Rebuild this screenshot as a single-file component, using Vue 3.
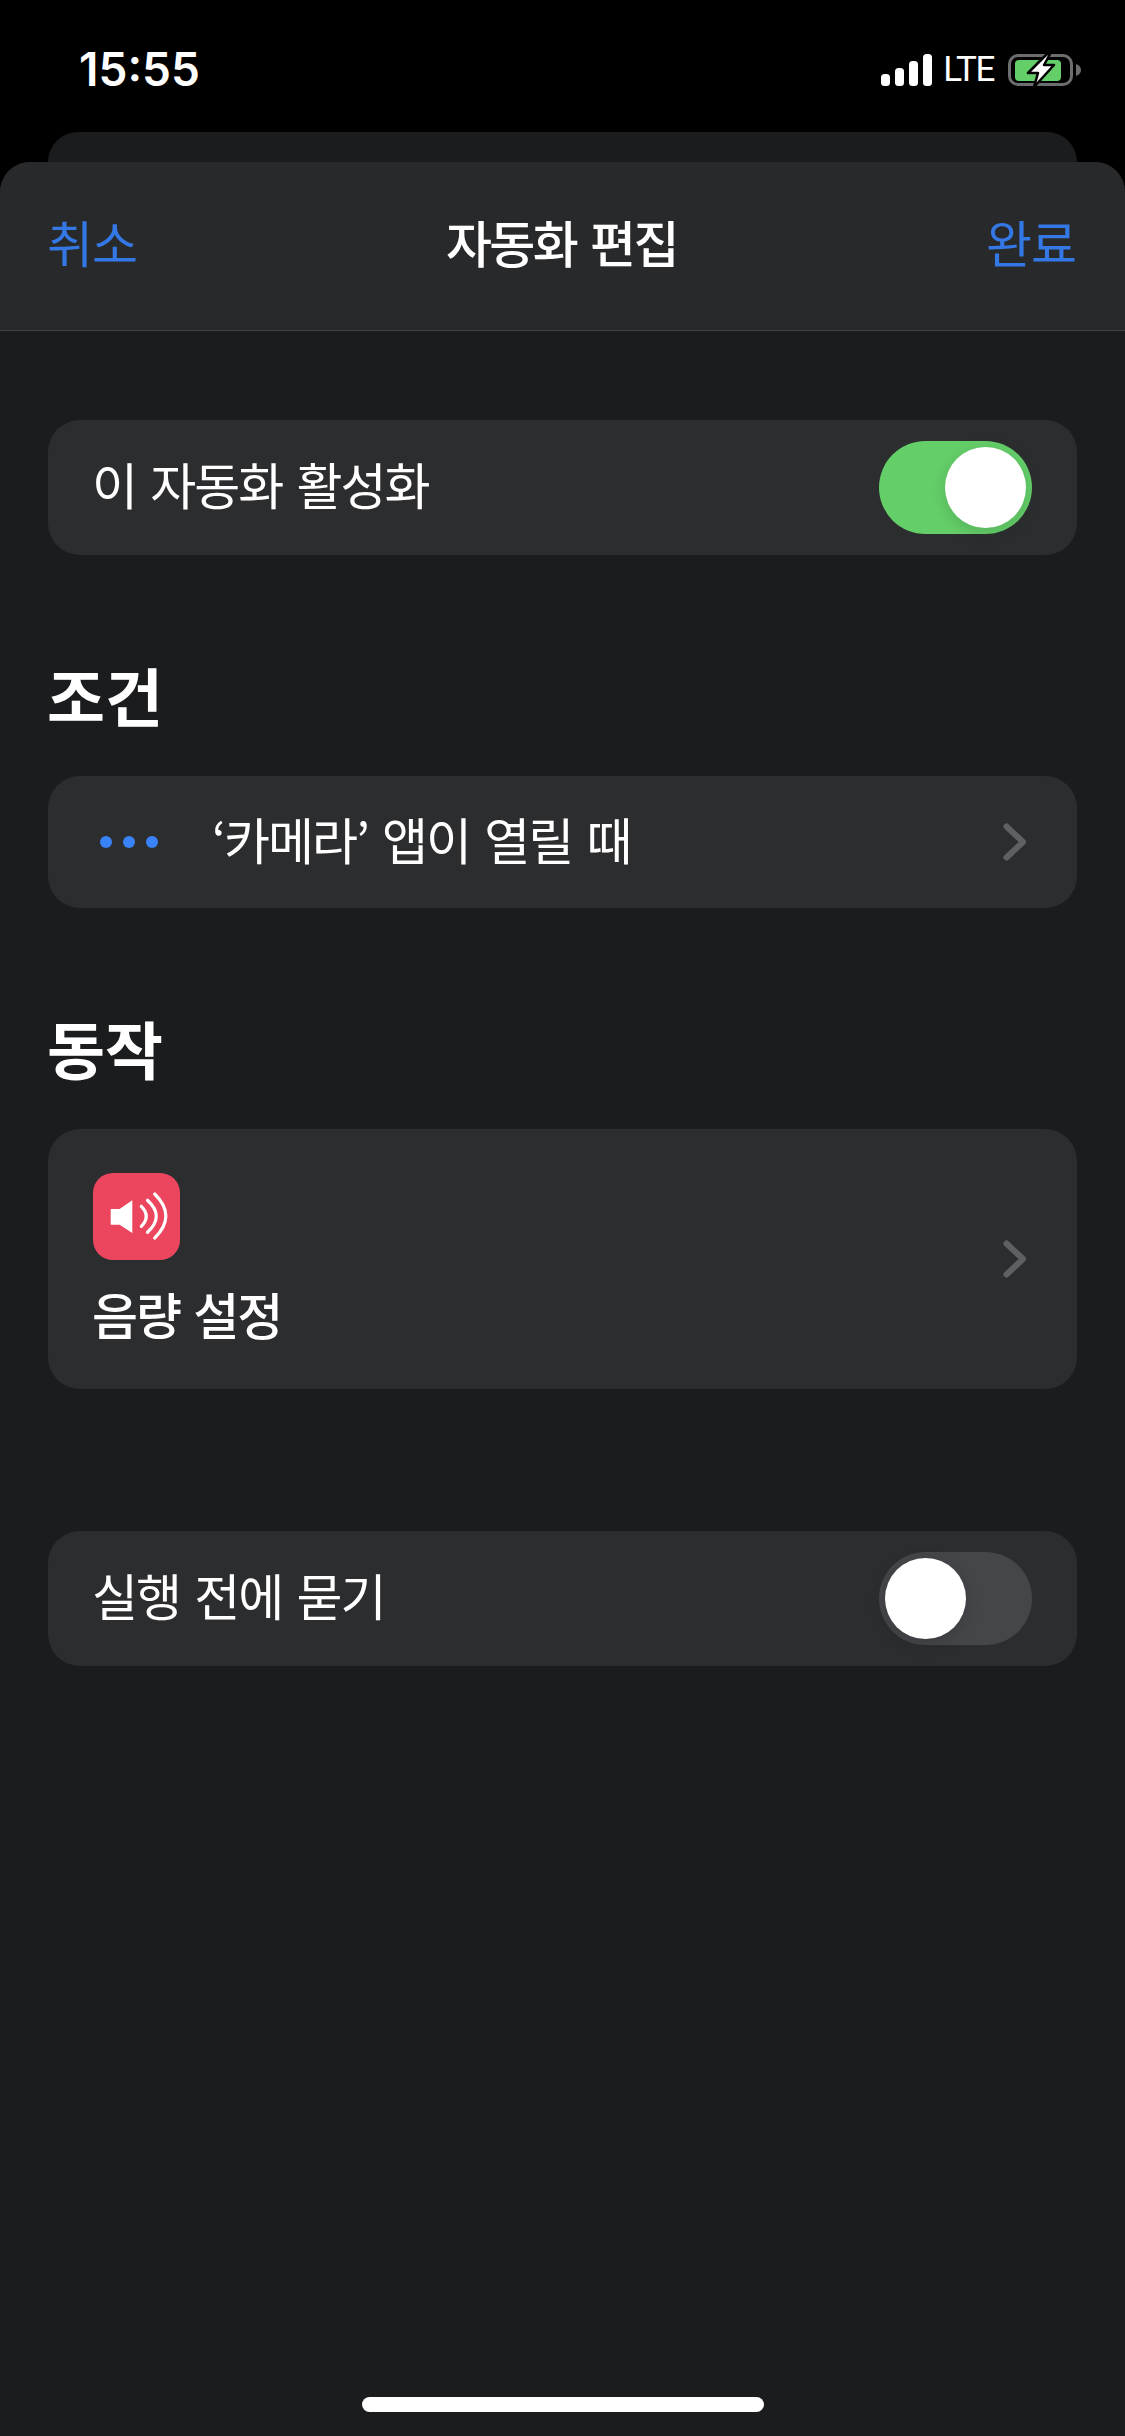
<script setup>
</script>

<template>
  <div class="screen">
    <div class="status">
      <span class="time">15:55</span>
      <div class="status-right">
        <svg class="signal" width="51" height="32" viewBox="0 0 51 32">
          <rect x="0" y="20" width="9" height="12" rx="3.5" fill="#fff" />
          <rect x="14" y="14" width="9" height="18" rx="3.5" fill="#fff" />
          <rect x="28" y="7" width="9" height="25" rx="3.5" fill="#fff" />
          <rect x="42" y="0" width="9" height="32" rx="3.5" fill="#fff" />
        </svg>
        <span class="lte">LTE</span>
        <svg class="battery" width="74" height="34" viewBox="0 0 74 34">
          <rect x="1.5" y="2.5" width="62" height="29" rx="8.5" fill="none" stroke="#6c6d6f" stroke-width="3" />
          <rect x="7" y="7" width="46" height="21" rx="4" fill="#64cf69" />
          <path d="M68 11 C71 12 73 14 73 17 C73 20 71 22 68 23 Z" fill="#6c6d6f" />
          <path d="M39 1 L20 20 L30 20 L26 34 L46 12 L36 12 L42 1 Z" fill="#fff" stroke="#000" stroke-width="2.5" stroke-linejoin="round" />
        </svg>
      </div>
    </div>
    <div class="back-card"></div>
    <div class="sheet">
      <header class="nav">
        <span class="nav-link">취소</span>
        <span class="nav-title">자동화 편집</span>
        <span class="nav-link">완료</span>
      </header>
      <main class="body">
        <div class="card toggle-card first">
          <span class="label">이 자동화 활성화</span>
          <div class="switch on"><div class="knob"></div></div>
        </div>

        <h2 class="heading">조건</h2>
        <div class="card condition">
          <div class="dots"><i></i><i></i><i></i></div>
          <span class="label cond-label">‘카메라’ 앱이 열릴 때</span>
          <svg class="chevron" width="24" height="38" viewBox="0 0 24 38">
            <path d="M3.5 3.5 L20 19 L3.5 34.5" fill="none" stroke="#5f6064" stroke-width="6" stroke-linecap="round" stroke-linejoin="round" />
          </svg>
        </div>

        <h2 class="heading">동작</h2>
        <div class="card action">
          <div class="action-main">
            <div class="app-icon">
              <svg width="87" height="87" viewBox="0 0 87 87">
                <path d="M17.7 36 H26.6 L39.3 27.3 V60 L26.6 51.7 H17.7 Z" fill="#fff" />
                <g fill="none" stroke="#fff" stroke-width="3.2" stroke-linecap="round">
                  <path d="M48.3 33.3 Q58.3 43.3 48.3 53.3" />
                  <path d="M54.5 27.3 Q72 43.3 54.5 59.3" />
                  <path d="M61.7 21 Q84 43 61.7 65" />
                </g>
              </svg>
            </div>
            <span class="action-label">음량 설정</span>
          </div>
          <svg class="chevron" width="24" height="38" viewBox="0 0 24 38">
            <path d="M3.5 3.5 L20 19 L3.5 34.5" fill="none" stroke="#5f6064" stroke-width="6" stroke-linecap="round" stroke-linejoin="round" />
          </svg>
        </div>

        <div class="card toggle-card last">
          <span class="label">실행 전에 묻기</span>
          <div class="switch"><div class="knob"></div></div>
        </div>

        <div class="home"></div>
      </main>
    </div>
  </div>
</template>

<style scoped>
.screen {
  width: 1125px;
  height: 2436px;
  background: #000;
  display: flex;
  flex-direction: column;
  overflow: hidden;
  font-family: "Noto Sans CJK KR", "Noto Sans", sans-serif;
  color: #fff;
}
.status {
  height: 132px;
  flex: none;
  display: flex;
  justify-content: space-between;
  align-items: flex-start;
  padding: 46px 43px 0 79px;
  box-sizing: border-box;
}
.time {
  font-family: Inter, sans-serif;
  font-size: 46px;
  font-weight: 600;
  line-height: 46px;
}
.status-right {
  display: flex;
  align-items: center;
  margin-top: 7px;
}
.lte {
  font-family: Roboto, sans-serif;
  font-size: 35px;
  line-height: 34px;
  letter-spacing: -1.4px;
  margin: 0 14px 0 11px;
}
.back-card {
  height: 30px;
  flex: none;
  margin: 0 48px;
  background: #1b1c1e;
  border-radius: 30px 30px 0 0;
}
.sheet {
  flex: 1;
  display: flex;
  flex-direction: column;
  border-radius: 30px 30px 0 0;
  overflow: hidden;
  background: #1b1c1e;
}
.nav {
  height: 158px;
  flex: none;
  display: flex;
  justify-content: space-between;
  align-items: center;
  padding: 0 49px 10px 47px;
  background: #28292b;
  border-bottom: 1px solid #414244;
}
.nav-link {
  font-size: 50px;
  color: #3478e6;
  letter-spacing: -1px;
}
.nav-title {
  font-size: 50px;
  font-weight: 500;
  letter-spacing: -2.5px;
  word-spacing: 5px;
}
.body {
  flex: 1;
  display: flex;
  flex-direction: column;
  padding: 0 48px;
}
.card {
  background: #2c2d2f;
  border-radius: 32px;
  display: flex;
  align-items: center;
  flex: none;
}
.toggle-card {
  height: 135px;
  justify-content: space-between;
  padding: 0 45px 0 44px;
}
.first {
  margin-top: 89px;
}
.last {
  margin-top: 142px;
}
.label {
  font-size: 50px;
  letter-spacing: -2px;
  word-spacing: 5px;
  padding-bottom: 9px;
}
.switch {
  width: 153px;
  height: 93px;
  border-radius: 47px;
  background: #45464a;
  padding: 6px;
  box-sizing: border-box;
  display: flex;
}
.switch.on {
  background: #64cf69;
  justify-content: flex-end;
}
.knob {
  width: 81px;
  height: 81px;
  border-radius: 50%;
  background: #fff;
  box-shadow: 0 4px 16px rgba(0, 0, 0, 0.15);
}
.heading {
  margin: 0 0 42px -1px;
  padding-top: 99px;
  font-size: 63px;
  line-height: 80px;
  font-weight: 700;
}
.condition {
  height: 132px;
  padding: 0 50px 0 52px;
}
.dots {
  display: flex;
  gap: 11px;
  width: 112px;
  flex: none;
}
.dots i {
  width: 12px;
  height: 12px;
  border-radius: 50%;
  background: #3a82f7;
}
.cond-label {
  flex: 1;
}
.action {
  height: 260px;
  padding: 0 50px 0 45px;
  justify-content: space-between;
}
.action-main {
  display: flex;
  flex-direction: column;
  gap: 23px;
  align-items: flex-start;
}
.app-icon {
  width: 87px;
  height: 87px;
  border-radius: 20px;
  background: #ec465f;
}
.app-icon svg {
  display: block;
}
.action-label {
  font-size: 50px;
  font-weight: 500;
  line-height: 60px;
  letter-spacing: -2px;
  word-spacing: 4px;
  margin: 0 0 2px -1px;
}
.home {
  width: 402px;
  height: 15px;
  border-radius: 8px;
  background: #fff;
  margin: auto auto 24px;
}
</style>

<style>
html, body {
  margin: 0;
  background: #000;
}
</style>
